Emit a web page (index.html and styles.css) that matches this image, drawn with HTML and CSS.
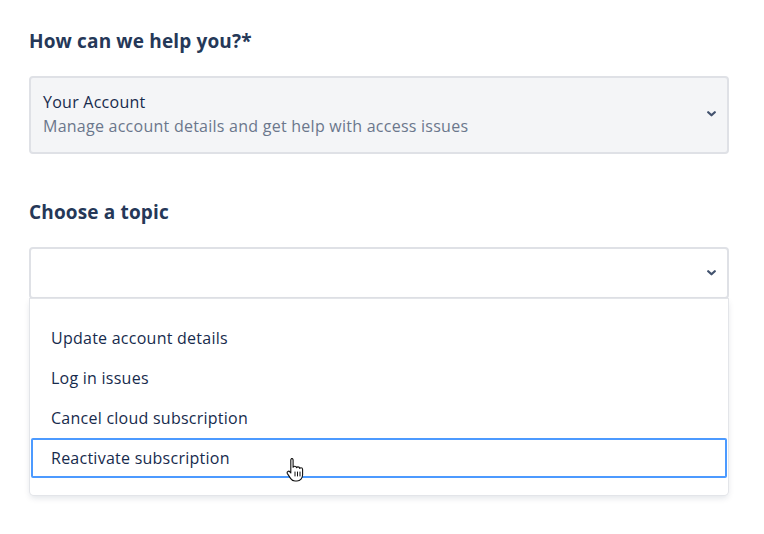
FILE: index.html
```html
<!DOCTYPE html>
<html lang="en">
<head>
    <meta charset="UTF-8">
    <meta name="viewport" content="width=device-width, initial-scale=1.0">
    <title>Support request</title>
    <link rel="stylesheet" href="styles.css">
</head>
<body>

    <div class="container">

        <!-- Request type -->
        <h2 class="field-label">How can we help you?*</h2>
        <div class="select select-filled">
            <div class="select-value">
                <div class="select-title">Your Account</div>
                <div class="select-desc">Manage account details and get help with access issues</div>
            </div>
            <svg class="chevron" width="9" height="6" viewBox="0 0 9 6"><path d="M1.2 1.2l3.3 3.1 3.3-3.1" fill="none" stroke="#42526e" stroke-width="2.2" stroke-linecap="round" stroke-linejoin="round"/></svg>
        </div>

        <!-- Topic -->
        <h2 class="field-label topic-label">Choose a topic</h2>
        <div class="select select-empty">
            <div class="select-value"></div>
            <svg class="chevron" width="9" height="6" viewBox="0 0 9 6"><path d="M1.2 1.2l3.3 3.1 3.3-3.1" fill="none" stroke="#42526e" stroke-width="2.2" stroke-linecap="round" stroke-linejoin="round"/></svg>
        </div>

        <ul class="menu">
            <li class="menu-item">Update account details</li>
            <li class="menu-item">Log in issues</li>
            <li class="menu-item">Cancel cloud subscription</li>
            <li class="menu-item is-focused">
                Reactivate subscription
                <!-- mouse pointer -->
                <svg class="pointer" width="18" height="26" viewBox="0 0 18 26">
                    <path d="M5.5 1.5c1 0 1.6.7 1.6 1.6v7.2c.3-.6 1-1 1.7-1 1 0 1.6.6 1.7 1.4.3-.5.9-.8 1.5-.8 1 0 1.6.7 1.7 1.5.3-.4.8-.6 1.3-.6 1 0 1.6.8 1.6 1.7v5.3c0 3.3-2.3 6.2-5.6 6.2H9c-2 0-3.300-.9-4.3-2.4l-3.3-5c-.5-.8-.3-1.8.5-2.2.7-.4 1.5-.2 2 .4l.9 1.2V3.1c0-.9.7-1.6 1.6-1.6z" fill="#fff" stroke="#111" stroke-width="1.1" stroke-linejoin="round"/>
                    <path d="M9 15v4M11.5 15v4M14 15v4" stroke="#111" stroke-width="1" stroke-linecap="round"/>
                </svg>
            </li>
        </ul>

    </div>

</body>
</html>
```

FILE: styles.css
```css
body {
    font-family: 'Open Sans', 'Noto Sans', sans-serif;
    background-color: #fff;
    color: #172b4d;
    margin: 0;
    padding: 0;
}
.container {
    width: 700px;
    padding: 29px 0 40px 29px;
}
.field-label {
    margin: 0 0 23px;
    font-size: 19px;
    line-height: 24px;
    font-weight: 700;
    letter-spacing: 0.15px;
    color: #253858;
}
.topic-label {
    margin-top: 46px;
}
.select {
    display: flex;
    align-items: center;
    border: 2px solid #dfe1e6;
    border-radius: 4px;
    box-sizing: border-box;
}
.select-filled {
    background-color: #f4f5f7;
    padding: 12px 11px 14px 12px;
}
.select-empty {
    background-color: #fff;
    height: 52px;
    padding: 0 11px 0 12px;
}
.select-value {
    flex: 1;
    font-size: 16px;
    line-height: 24px;
    letter-spacing: 0.25px;
}
.select-title {
    color: #172b4d;
}
.select-desc {
    color: #6b778c;
}
.menu {
    margin: 0 1px;
    padding: 19px 0 17px;
    list-style: none;
    background-color: #fff;
    border-radius: 0 0 4px 4px;
    box-shadow: 0 0 0 1px #e3e5e9, 0 3px 6px rgba(9, 30, 66, 0.12);
}
.menu-item {
    position: relative;
    margin: 0 1px;
    border: 2px solid transparent;
    border-radius: 2px;
    padding: 0 18px;
    height: 40px;
    box-sizing: border-box;
    line-height: 36px;
    font-size: 16px;
    letter-spacing: 0.25px;
    color: #172b4d;
}
.menu-item.is-focused {
    border-color: #4c9aff;
}
.pointer {
    position: absolute;
    left: 253px;
    top: 17px;
}
```
